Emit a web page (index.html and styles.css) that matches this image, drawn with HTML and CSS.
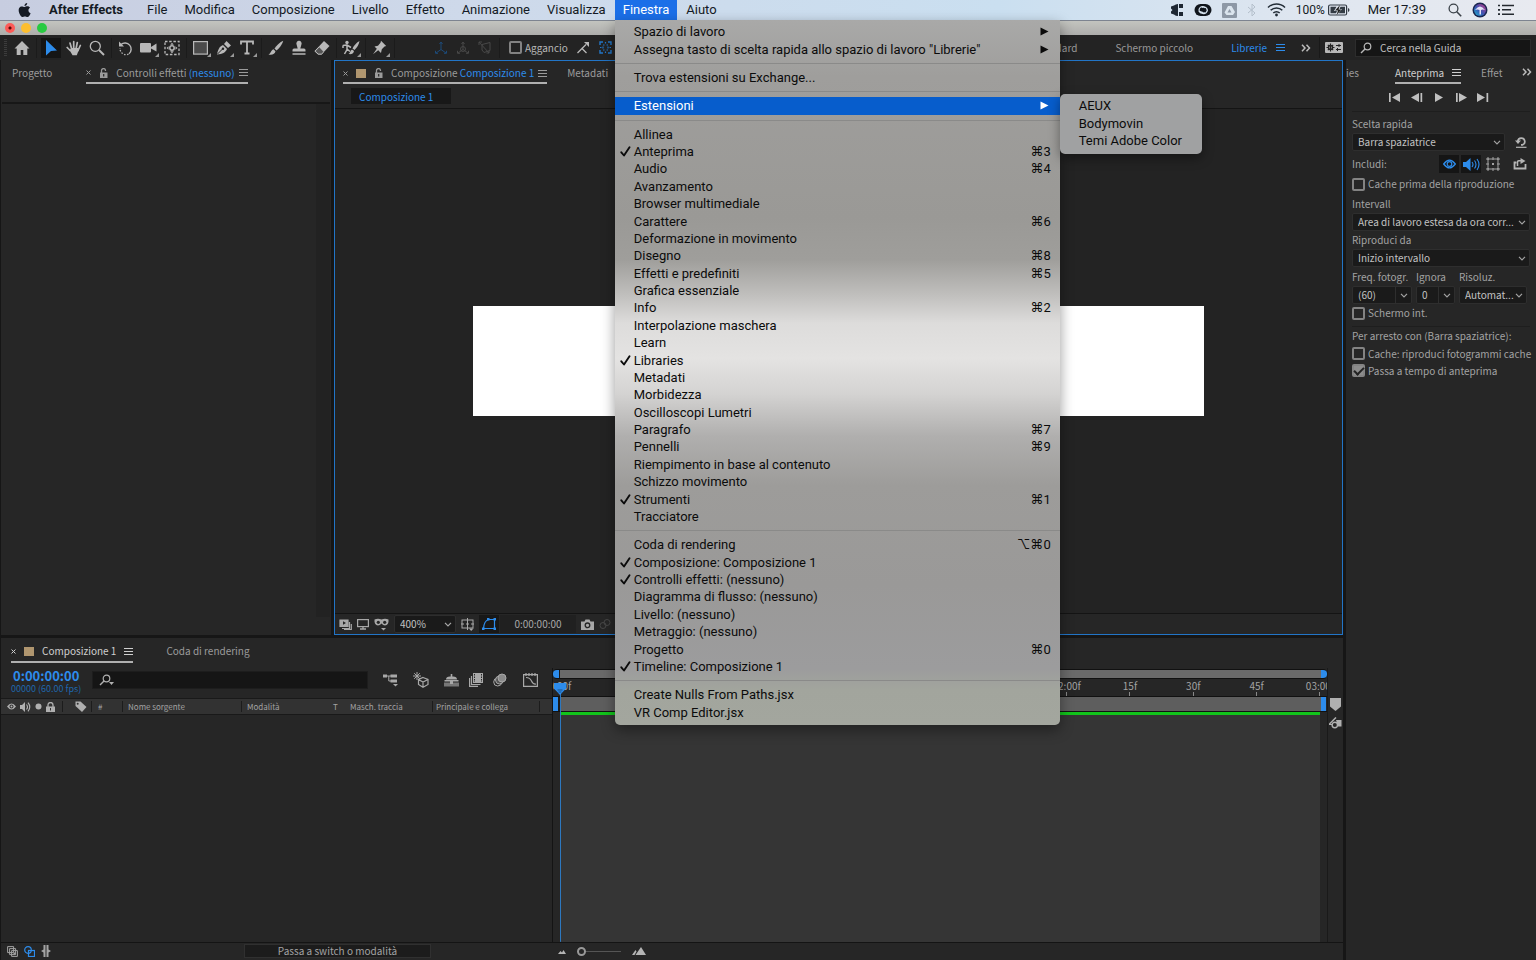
FILE: index.html
```
<!DOCTYPE html>
<html lang="it">
<head>
  <meta charset="UTF-8">
  <title>After Effects</title>
  <link rel="stylesheet" href="styles.css">
</head>
<body>

  <svg class="defs" width="0" height="0">
    <symbol id="i-menu" viewBox="0 0 9 9"><path d="M0 1.500h9M0 4.500h9M0 7.500h9" stroke="currentColor" fill="none"/></symbol>
    <symbol id="i-close" viewBox="0 0 5 5"><path d="M.5.5l4 4M4.500.5l-4 4" stroke="currentColor" fill="none"/></symbol>
    <symbol id="i-lock" viewBox="0 0 9 10"><path d="M1 4.500h7.500V10H1z" fill="currentColor"/><path d="M2.500 5V2.700a2 2 0 0 1 4-.2V3" stroke="currentColor" stroke-width="1.300" fill="none"/><path d="M4.700 6v2.500" stroke="#262626" stroke-width="1.200"/></symbol>
    <symbol id="i-chev" viewBox="0 0 8 5"><path d="M1 .8l3 3 3-3" stroke="currentColor" stroke-width="1.200" fill="none"/></symbol>
    <symbol id="i-more" viewBox="0 0 10 8"><path d="M1 .8l3 3.200-3 3.200M5.500.8l3 3.200-3 3.200" stroke="currentColor" stroke-width="1.500" fill="none"/></symbol>
    <symbol id="i-check" viewBox="0 0 11 11"><path d="M1.300 6.300l2.700 3.200L9.500 1.200" stroke="currentColor" stroke-width="1.900" fill="none" stroke-linecap="round" stroke-linejoin="round"/></symbol>
    <symbol id="i-arrow" viewBox="0 0 9 9"><path d="M.5.5l8 4-8 4z" fill="currentColor"/></symbol>
    <symbol id="i-search" viewBox="0 0 12 12"><circle cx="7.500" cy="4.500" r="3.300" stroke="currentColor" stroke-width="1.200" fill="none"/><path d="M5 7l-4 4" stroke="currentColor" stroke-width="1.500"/></symbol>
    <symbol id="i-axes" viewBox="0 0 14 14"><path d="M7 1.500v7L2 12M7 8.500l5 3.500M5.500 3L7 1l1.500 2M1.500 9.800V12.300h2.500M12.500 9.800v2.500H10" stroke="currentColor" fill="none"/></symbol>
  </svg>

  <header class="menubar">
    <button class="apple" aria-label="Apple">
      <svg width="13" height="15" viewBox="0 0 13 15"><path d="M9.200 0c.1 1.600-1.200 3-2.700 3C6.300 1.500 7.700.1 9.200 0zM6.600 4c.6 0 1.500-.7 2.700-.7 1 0 2 .5 2.700 1.400-2.300 1.300-2 4.600.6 5.500-.5 1.500-1.800 3.800-3.200 3.800-.9 0-1.300-.6-2.500-.6s-1.600.6-2.500.6C2.600 14-1.700 6.500 2.400 3.800c1.800-1 3 .2 4.200.2z" fill="currentColor"/></svg>
    </button>
    <nav class="menus">
      <button class="app-name">After Effects</button>
      <button>File</button>
      <button>Modifica</button>
      <button>Composizione</button>
      <button>Livello</button>
      <button>Effetto</button>
      <button>Animazione</button>
      <button>Visualizza</button>
      <div class="menu-holder">
        <button class="open">Finestra</button>
        <div class="dropdown" role="menu">
          <button class="item" role="menuitem">Spazio di lavoro<svg class="sub" width="9" height="9"><use href="#i-arrow"/></svg></button>
          <button class="item" role="menuitem">Assegna tasto di scelta rapida allo spazio di lavoro "Librerie"<svg class="sub" width="9" height="9"><use href="#i-arrow"/></svg></button>
          <hr>
          <button class="item" role="menuitem">Trova estensioni su Exchange...</button>
          <hr>
          <div class="item-holder">
            <button class="item selected" role="menuitem">Estensioni<svg class="sub" width="9" height="9"><use href="#i-arrow"/></svg></button>
            <div class="submenu" role="menu">
              <button class="item" role="menuitem">AEUX</button>
              <button class="item" role="menuitem">Bodymovin</button>
              <button class="item" role="menuitem">Temi Adobe Color</button>
            </div>
          </div>
          <hr>
          <button class="item" role="menuitem">Allinea</button>
          <button class="item" role="menuitem"><svg class="tick" width="11" height="11"><use href="#i-check"/></svg>Anteprima<kbd>⌘3</kbd></button>
          <button class="item" role="menuitem">Audio<kbd>⌘4</kbd></button>
          <button class="item" role="menuitem">Avanzamento</button>
          <button class="item" role="menuitem">Browser multimediale</button>
          <button class="item" role="menuitem">Carattere<kbd>⌘6</kbd></button>
          <button class="item" role="menuitem">Deformazione in movimento</button>
          <button class="item" role="menuitem">Disegno<kbd>⌘8</kbd></button>
          <button class="item" role="menuitem">Effetti e predefiniti<kbd>⌘5</kbd></button>
          <button class="item" role="menuitem">Grafica essenziale</button>
          <button class="item" role="menuitem">Info<kbd>⌘2</kbd></button>
          <button class="item" role="menuitem">Interpolazione maschera</button>
          <button class="item" role="menuitem">Learn</button>
          <button class="item" role="menuitem"><svg class="tick" width="11" height="11"><use href="#i-check"/></svg>Libraries</button>
          <button class="item" role="menuitem">Metadati</button>
          <button class="item" role="menuitem">Morbidezza</button>
          <button class="item" role="menuitem">Oscilloscopi Lumetri</button>
          <button class="item" role="menuitem">Paragrafo<kbd>⌘7</kbd></button>
          <button class="item" role="menuitem">Pennelli<kbd>⌘9</kbd></button>
          <button class="item" role="menuitem">Riempimento in base al contenuto</button>
          <button class="item" role="menuitem">Schizzo movimento</button>
          <button class="item" role="menuitem"><svg class="tick" width="11" height="11"><use href="#i-check"/></svg>Strumenti<kbd>⌘1</kbd></button>
          <button class="item" role="menuitem">Tracciatore</button>
          <hr>
          <button class="item" role="menuitem">Coda di rendering<kbd>⌥⌘0</kbd></button>
          <button class="item" role="menuitem"><svg class="tick" width="11" height="11"><use href="#i-check"/></svg>Composizione: Composizione 1</button>
          <button class="item" role="menuitem"><svg class="tick" width="11" height="11"><use href="#i-check"/></svg>Controlli effetti: (nessuno)</button>
          <button class="item" role="menuitem">Diagramma di flusso: (nessuno)</button>
          <button class="item" role="menuitem">Livello: (nessuno)</button>
          <button class="item" role="menuitem">Metraggio: (nessuno)</button>
          <button class="item" role="menuitem">Progetto<kbd>⌘0</kbd></button>
          <button class="item" role="menuitem"><svg class="tick" width="11" height="11"><use href="#i-check"/></svg>Timeline: Composizione 1</button>
          <hr>
          <button class="item" role="menuitem">Create Nulls From Paths.jsx</button>
          <button class="item" role="menuitem">VR Comp Editor.jsx</button>
        </div>
      </div>
      <button>Aiuto</button>
    </nav>
    <div class="status">
      <svg width="14" height="14" viewBox="0 0 14 14"><path d="M8 1v12a6 6 0 0 1-4-1.500L1 10.500V8.500L2.500 7 1 5.500v-2l3-1A6 6 0 0 1 8 1z" fill="#1d2733"/><path d="M9 1h4v4H9zM9 9h4v4H9z" fill="#1d2733"/></svg>
      <svg width="18" height="14" viewBox="0 0 18 14"><rect x=".5" y="1" width="17" height="12" rx="6" fill="#10151c"/><path d="M10.500 9.500a3.300 3.300 0 1 1 .5-4.500M4.500 8L9 9.500M8 4.500a3.300 3.300 0 1 1-.5 5" stroke="#d5e2ee" stroke-width="1.200" fill="none"/></svg>
      <svg width="15" height="15" viewBox="0 0 15 15"><rect width="15" height="15" rx="1" fill="#8d98a6"/><path d="M6 3L2.500 9.500 4.500 12h6.500l2-3L9.500 3zM7.500 6l2 3.500h-4z" fill="#dbe5ee" fill-rule="evenodd"/></svg>
      <svg width="10" height="14" viewBox="0 0 10 14"><path d="M1 4l7 6-3 3V1l3 3-7 6" stroke="#b4bfcb" fill="none"/></svg>
      <svg width="19" height="14" viewBox="0 0 19 14"><path d="M1 4.500a12 12 0 0 1 17 0M3.700 7.300a8.200 8.200 0 0 1 11.600 0M6.300 10a4.500 4.500 0 0 1 6.400 0" stroke="#222c36" stroke-width="1.500" fill="none"/><circle cx="9.500" cy="12" r="1.400" fill="#222c36"/></svg>
      <span class="battery">100%
        <svg width="22" height="12" viewBox="0 0 22 12"><rect x=".6" y="1" width="18" height="10" rx="1.500" stroke="#333b44" stroke-width="1.200" fill="none"/><path d="M2.500 2.800h6L6 7h3L8 9.200H2.500zM17 2.800h-4.500L11.500 5H14l-3.500 4.200H17z" fill="#333b44"/><path d="M12 1L7 6.500h3L8.500 11l5-5.500h-3z" fill="#222"/><path d="M20 4v4q1.500-.5 1.500-2T20 4z" fill="#333b44"/></svg>
      </span>
      <span class="clock">Mer 17:39</span>
      <svg width="14" height="14" viewBox="0 0 14 14"><circle cx="5.500" cy="5.500" r="4.400" stroke="#3a4148" stroke-width="1.300" fill="none"/><path d="M8.800 8.800l4.400 4.400" stroke="#3a4148" stroke-width="1.600"/></svg>
      <svg width="16" height="16" viewBox="0 0 16 16"><defs><linearGradient id="siri" x1="0" y1="1" x2="1" y2="0"><stop stop-color="#1fb7cf"/><stop offset=".45" stop-color="#3a56b5"/><stop offset="1" stop-color="#c23a86"/></linearGradient></defs><circle cx="8" cy="8" r="7.500" fill="#1b2650"/><circle cx="8" cy="8" r="6" fill="url(#siri)"/><path d="M3 8q2.500-3.500 5-3.500T13 8q-2.500-.8-4 0v4.500H7.500V8Q5.500 7.200 3 8z" fill="#e6e2f6"/></svg>
      <svg width="17" height="12" viewBox="0 0 17 12"><path d="M4 1.500h12M4 5.800h9M4 10.200h12" stroke="#24292f" stroke-width="1.500"/><path d="M0 1.500h2M0 5.800h2M0 10.200h2" stroke="#24292f" stroke-width="1.700"/></svg>
    </div>
  </header>

  <div class="titlebar">
    <button class="light red" aria-label="Chiudi"></button>
    <button class="light yellow" aria-label="Riduci"></button>
    <button class="light green" aria-label="Zoom"></button>
  </div>

  <div class="toolbar">
    <span class="grip"></span>
    <div class="tools">
      <button aria-label="Home"><svg width="16" height="16" viewBox="0 0 16 16"><path d="M8 1L.5 8.500h2.200V15h4V10h2.600v5h4V8.500h2.200z" fill="currentColor"/></svg></button>
    </div>
    <div class="tools">
      <button class="active" aria-label="Selezione"><svg width="16" height="18" viewBox="0 0 16 18"><path d="M3 1l11 10.500-6 .5-5 4.500z" fill="#2d8ceb"/></svg></button>
      <button aria-label="Mano"><svg width="16" height="16" viewBox="0 0 16 16"><path d="M1.200 7.500l3 3M4 3l1.700 6M7.700 1.500V9M11.300 2.500L10 9M14.300 5.500L12 10.500" stroke="currentColor" stroke-width="1.700" stroke-linecap="round"/><path d="M3.500 10l2-2h6.500l.8 2-2 5.200H6.500z" fill="currentColor"/></svg></button>
      <button aria-label="Zoom"><svg width="16" height="16" viewBox="0 0 16 16"><circle cx="6.300" cy="6.300" r="5" stroke="currentColor" stroke-width="1.300" fill="none"/><path d="M10 10l5 5" stroke="currentColor" stroke-width="2"/></svg></button>
    </div>
    <div class="tools">
      <button aria-label="Rotazione"><svg width="16" height="16" viewBox="0 0 16 16"><path d="M3 4.500a6 6 0 1 1 8 9.300" stroke="currentColor" stroke-width="1.400" fill="none"/><path d="M10.500 14.200A6.200 6.200 0 0 1 2 8" stroke="currentColor" stroke-width="1.300" stroke-dasharray="1.500 1.500" fill="none"/><path d="M1 1.500v5h5z" fill="currentColor"/></svg></button>
      <button class="more" aria-label="Cinepresa"><svg width="17" height="12" viewBox="0 0 17 12"><rect y="1" width="11" height="9.500" rx="1" fill="currentColor"/><path d="M11 5l5.500-3.500v8L11 6.500z" fill="currentColor"/></svg></button>
      <button aria-label="Punto di ancoraggio"><svg width="16" height="16" viewBox="0 0 16 16"><rect x="1" y="1.500" width="14" height="13" stroke="currentColor" stroke-width="1.300" stroke-dasharray="2.500 1.700" fill="none"/><circle cx="8" cy="8" r="2.200" stroke="currentColor" stroke-width="1.500" fill="none"/><path d="M8 2.800l1.800 2H6.200zM8 13.200l1.800-2H6.200zM2.500 8l2-1.800v3.600zM13.500 8l-2-1.800v3.600z" fill="currentColor"/></svg></button>
    </div>
    <div class="tools">
      <button class="more" aria-label="Rettangolo"><svg width="15" height="14" viewBox="0 0 15 14"><rect x=".6" y=".6" width="13.800" height="12.500" fill="#4a4a4a" stroke="currentColor" stroke-width="1.200"/></svg></button>
      <button class="more" aria-label="Penna"><svg width="16" height="16" viewBox="0 0 16 16"><path d="M1 14.500C2 10 3 6.500 7 5l4 4c-1.500 3.500-4.500 5-10 5.500z" fill="currentColor"/><path d="M8 4l2.500-3L15 5.500 12 8z" fill="currentColor"/><path d="M1.500 14L6.500 9" stroke="#232323"/><circle cx="7" cy="8.700" r="1.200" fill="#232323"/></svg></button>
      <button class="more" aria-label="Testo"><svg width="14" height="15" viewBox="0 0 14 15"><path d="M1 4.500V1.500h12v3M7 1.500v12M4.500 13.500h5" stroke="currentColor" stroke-width="1.800" fill="none"/></svg></button>
    </div>
    <div class="tools">
      <button aria-label="Pennello"><svg width="16" height="16" viewBox="0 0 16 16"><path d="M15.300.7C12 2 8.500 5.500 6.500 8.500l2 2C11.500 8 14.500 4 15.300.7z" fill="currentColor"/><path d="M5.500 9.300l2 2c-.5 3-3.500 4-7 3.200 2.500-1 2-4 5-5.200z" fill="currentColor"/></svg></button>
      <button aria-label="Timbro clone"><svg width="16" height="16" viewBox="0 0 16 16"><path d="M8 .8a2.600 2.600 0 0 1 2.500 3.500L9.300 8.500H13a1.500 1.500 0 0 1 1.500 1.500v1.500h-13V10A1.500 1.500 0 0 1 3 8.500h3.700L5.500 4.300A2.600 2.600 0 0 1 8 .8z" fill="currentColor"/><path d="M1.500 14h13" stroke="currentColor" stroke-width="1.500"/></svg></button>
      <button aria-label="Gomma"><svg width="16" height="16" viewBox="0 0 16 16"><path d="M10 1l5.500 5-8 8.500H4L.7 11z" fill="currentColor"/><path d="M5.200 7.300L9.700 12l-2.200 2H4.300L1.500 11z" fill="#555"/><path d="M5 7L.9 11.200l3.300 2.900h3.300L9.700 12" stroke="currentColor" fill="none"/></svg></button>
    </div>
    <div class="tools">
      <button class="more" aria-label="Roto brush"><svg width="18" height="16" viewBox="0 0 18 16"><circle cx="5" cy="2.500" r="1.700" fill="currentColor"/><path d="M.8 5.500L5 5l4 2.500M5 5v4.500L2.500 14M5 9l3 2.500M1 8V5.500" stroke="currentColor" stroke-width="1.500" fill="none"/><path d="M17.500 1C14 3 12 5.500 10.500 8.500l2 1.500c2.500-2.500 4.500-5.500 5-9zM10 9.500l2 1.500c-.5 3-3 3.500-5.500 3 2-1 1.500-3.500 3.500-4.500z" fill="currentColor"/></svg></button>
    </div>
    <div class="tools">
      <button class="more" aria-label="Puntina"><svg width="15" height="15" viewBox="0 0 15 15"><path d="M9 .8l5.200 5.200-1.700.5-2.700 2.800L9 13 2.500 6.500l3.500-.8L8.500 2.800zM5 8.500l1.500 1.500L1 14.300z" fill="currentColor"/></svg></button>
    </div>
    <div class="tools dim">
      <button class="axis" aria-label="Assi locali"><svg width="14" height="14"><use href="#i-axes"/></svg></button>
      <button aria-label="Assi globali"><svg width="14" height="14" viewBox="0 0 14 14"><use href="#i-axes"/><circle cx="7" cy="8" r="2.500" stroke="currentColor" fill="none"/></svg></button>
      <button aria-label="Assi vista"><svg width="14" height="14" viewBox="0 0 14 14"><path d="M4 3.500L12 1.500V9.500L6 11.500 4 9zM1 1l10 11M1 1v3M1 1h3M11 12V9.500M11 12H8.500" stroke="currentColor" fill="none"/></svg></button>
    </div>
    <label class="check snap"><input type="checkbox">Aggancio</label>
    <svg class="snap-icon" width="12" height="13" viewBox="0 0 12 13"><path d="M.5 12L5 7.500l4.500 4.500M5 7.500l4-4" stroke="currentColor" stroke-width="1.300" fill="none"/><path d="M7 1h5v5z" fill="currentColor"/></svg>
    <svg class="snap-blue" width="13" height="13" viewBox="0 0 13 13"><path d="M1 4V1h3M9 1h3v3M12 9v3H9M4 12H1V9" stroke="currentColor" stroke-width="1.400" fill="none"/><path d="M4 4h1.500M7.500 4H9M4 9h1.500M7.500 9H9M6.500 1v1.500M6.500 10.500V12M1 6.500h1.500M10.500 6.500H12M4 5.500v2M9 5.500v2" stroke="currentColor" stroke-width="1.200"/></svg>
    <nav class="workspaces">
      <a href="#">Standard</a>
      <a href="#">Schermo piccolo</a>
      <a href="#" class="current">Librerie<svg width="9" height="9"><use href="#i-menu"/></svg></a>
    </nav>
    <button class="overflow" aria-label="Altre aree"><svg width="10" height="8"><use href="#i-more"/></svg></button>
    <button class="ws-gear" aria-label="Area di lavoro"><svg width="18" height="11" viewBox="0 0 18 11"><rect width="18" height="11" rx="1" fill="currentColor"/><circle cx="5.500" cy="5.500" r="2" stroke="#232323" stroke-width="1.500" fill="none"/><path d="M5.500 1.500v8M1.500 5.500h2M7.500 5.500h2M2.800 2.800l1.400 1.400M8.200 2.800L6.800 4.200M2.800 8.200l1.400-1.400M8.200 8.200L6.800 6.800M11 3.500h5M11 7.500h5" stroke="#232323" stroke-width="1.200"/><path d="M14 2v3M12.500 6v3" stroke="#232323"/></svg></button>
    <label class="help"><svg width="12" height="12"><use href="#i-search"/></svg><input type="text" aria-label="Cerca nella Guida" value="Cerca nella Guida"></label>
  </div>

  <main class="workspace">
    <div class="left-side">
      <div class="upper">
        <section class="panel effects">
          <div class="tabs">
            <button class="tab">Progetto</button>
            <button class="tab on"><svg width="5" height="5"><use href="#i-close"/></svg><svg width="9" height="10"><use href="#i-lock"/></svg><span>Controlli effetti <b>(nessuno)</b></span><svg width="9" height="9"><use href="#i-menu"/></svg></button>
          </div>
          <div class="effects-body"><div class="gutter"></div></div>
        </section>

        <section class="panel comp">
          <div class="tabs">
            <button class="tab on"><svg width="5" height="5"><use href="#i-close"/></svg><em class="swatch"></em><svg width="9" height="10"><use href="#i-lock"/></svg><span>Composizione <b>Composizione 1</b></span><svg width="9" height="9"><use href="#i-menu"/></svg></button>
            <button class="tab">Metadati</button>
          </div>
          <div class="crumbs"><button>Composizione 1</button></div>
          <div class="viewer"><div class="canvas"></div></div>
          <div class="comp-foot">
            <svg width="13" height="11" viewBox="0 0 13 11"><path d="M1 7.500V1h8v6.500zM10.500 3v6.500H3M12.300 5v5.500H5" stroke="currentColor" stroke-width="1.200" fill="none"/><path d="M1 1h8v6H1z" fill="currentColor"/><path d="M4 2.200l3 1.800-3 1.800z" fill="#262626"/></svg>
            <svg width="12" height="11" viewBox="0 0 12 11"><rect x=".6" y=".6" width="10.800" height="7" stroke="currentColor" stroke-width="1.200" fill="none"/><path d="M3 10h6M6 8v2" stroke="currentColor" stroke-width="1.300"/></svg>
            <svg width="15" height="13" viewBox="0 0 15 13"><path d="M.5 1.500q3.500-1.500 7 0 3.500-1.500 7 0 .5 5.500-3.500 6-2 0-3.500-2Q6 7.500 4 7.500 0 7 .5 1.500z" fill="currentColor"/><circle cx="4.300" cy="4.300" r="1.600" fill="#262626"/><circle cx="10.700" cy="4.300" r="1.600" fill="#262626"/><path d="M7 10h5l-2.500 2.500z" fill="currentColor"/></svg>
            <label class="select zoom"><select aria-label="Ingrandimento"><option>400%</option></select><svg width="8" height="5"><use href="#i-chev"/></svg></label>
            <svg width="13" height="13" viewBox="0 0 13 13"><rect x="1" y="2" width="11" height="8" stroke="currentColor" fill="none"/><path d="M6.500 0v12M0 6h3M10 6h3M5 6h3" stroke="currentColor"/><path d="M8 10.500h4.500L10.200 13z" fill="currentColor"/></svg>
            <button class="mask" aria-label="Tracciato maschera"><svg width="14" height="12" viewBox="0 0 14 12"><path d="M1.500 10.500Q2 3 6.500 1.500h6v9z" stroke="currentColor" stroke-width="1.200" fill="none"/><path d="M0 9.500h2.500V12H0zM11.500 9.500H14V12h-2.500zM11.500 0H14v2.500h-2.500zM5 0h2.500v2.500H5z" fill="currentColor"/></svg></button>
            <button class="time">0:00:00:00</button>
            <svg width="13" height="11" viewBox="0 0 13 11"><path d="M0 2.500h3.500L4.500.5h4l1 2H13V11H0z" fill="currentColor"/><circle cx="6.500" cy="6.300" r="2.300" stroke="#262626" stroke-width="1.300" fill="none"/></svg>
            <svg class="faint" width="13" height="12" viewBox="0 0 13 12"><circle cx="4" cy="7.500" r="3" stroke="currentColor" fill="none"/><circle cx="8" cy="4.500" r="3" stroke="currentColor" fill="none"/></svg>
          </div>
        </section>
      </div>

      <section class="panel timeline">
        <div class="tabs">
          <button class="tab on"><svg width="5" height="5"><use href="#i-close"/></svg><em class="swatch"></em><span>Composizione 1</span><svg width="9" height="9"><use href="#i-menu"/></svg></button>
          <button class="tab">Coda di rendering</button>
        </div>
        <div class="tl-main">
          <div class="layers">
            <div class="tl-tools">
              <div class="timecode"><strong>0:00:00:00</strong><small>00000 (60.00 fps)</small></div>
              <label class="tl-search"><svg width="16" height="12" viewBox="0 0 16 12"><use href="#i-search" width="12" height="12"/><path d="M10 8h5l-2.500 3z" fill="currentColor"/></svg><input type="text" aria-label="Cerca"></label>
              <div class="tl-icons">
                <svg width="15" height="14" viewBox="0 0 15 14"><path d="M0 1.500h4v3H0zM7.500 1.500H14v3H7.500zM7.500 6.500H14v3H7.500z" fill="currentColor"/><path d="M4 3h4M5.800 3v5H8" stroke="currentColor" fill="none"/><path d="M10 11h5l-2.500 2.500z" fill="currentColor"/></svg>
                <svg width="16" height="16" viewBox="0 0 16 16"><path d="M4 0v8M0 4h8M1.200 1.200l5.600 5.600M6.800 1.200L1.200 6.800" stroke="currentColor"/><path d="M10 5.500l5 2v5l-5 2.700-4.500-2.700v-5zM5.500 7.500L10 10l5-2.500M10 10v5" stroke="currentColor" stroke-width="1.200" fill="none"/></svg>
                <svg width="15" height="13" viewBox="0 0 15 13"><path d="M0 8.500h15v4H0z" fill="#777"/><path d="M2 5.500q0-3 4-3h3q4 0 4 3zM6.700 0h1.600v3H6.700zM.5 6h14v1.500H.5zM6 7h3v3H6z" fill="currentColor"/></svg>
                <svg width="14" height="14" viewBox="0 0 14 14"><path d="M4 0h10v10H4z" fill="currentColor"/><path d="M5.500 1v8M12.500 1v8" stroke="#262626" stroke-dasharray="1.500 1"/><path d="M2.500 3v8.500h9M.6 5v8.400H9" stroke="currentColor" stroke-width="1.200" fill="none"/></svg>
                <svg width="14" height="14" viewBox="0 0 14 14"><circle cx="4.700" cy="9" r="4" stroke="currentColor" fill="none"/><circle cx="6.500" cy="7" r="4" stroke="currentColor" fill="#555"/><circle cx="9" cy="5" r="4" stroke="currentColor" fill="#8a8a8a"/></svg>
                <svg width="15" height="14" viewBox="0 0 15 14"><path d="M.6 1.600h13.800v11.800H.6zM3 4.500q4 0 5.500 3.500T13 11M3 0v3M6 0v3M9 0v3M12 0v3" stroke="currentColor" stroke-width="1.200" fill="none"/></svg>
              </div>
            </div>
            <div class="columns">
              <div class="av">
                <svg width="9" height="7" viewBox="0 0 9 7"><path d="M0 3.500Q4.500-2.500 9 3.500 4.500 9.500 0 3.500z" fill="currentColor"/><circle cx="4.500" cy="3.500" r="2" fill="#323232"/><circle cx="4.500" cy="3.500" r="1" fill="currentColor"/></svg>
                <svg width="11" height="10" viewBox="0 0 11 10"><path d="M0 3h2l3-3v10L2 7H0z" fill="currentColor"/><path d="M6.500 2.500q2 2.500 0 5M8 .7q3.500 4.300 0 8.600" stroke="currentColor" stroke-width="1.200" fill="none"/></svg>
                <svg width="7" height="7" viewBox="0 0 7 7"><circle cx="3.500" cy="3.500" r="3" fill="currentColor"/></svg>
                <svg width="9" height="10" viewBox="0 0 9 10"><path d="M0 4.500h9V10H0z" fill="currentColor"/><path d="M2 5V3a2.500 2.500 0 0 1 5 0v2" stroke="currentColor" stroke-width="1.300" fill="none"/><path d="M4.500 6v2.500" stroke="#323232"/></svg>
              </div>
              <div class="tag"><svg width="12" height="11" viewBox="0 0 12 11"><path d="M.5.500H5.500l6 5.500-4.500 5L.5 5z" fill="currentColor"/><circle cx="2.700" cy="2.700" r="1" fill="#323232"/></svg></div>
              <div class="num">#</div>
              <div class="source">Nome sorgente</div>
              <div class="mode">Modalità</div>
              <div class="matte-t">T</div>
              <div class="matte">Masch. traccia</div>
              <div class="parent">Principale e collega</div>
              <div class="rest"></div>
            </div>
            <div class="layer-list"></div>
          </div>

          <div class="track">
            <div class="navigator"></div>
            <div class="ruler">
              <span>0:00f</span><span>15f</span><span>30f</span><span>45f</span><span>01:00f</span><span>15f</span><span>30f</span><span>45f</span><span>02:00f</span><span>15f</span><span>30f</span><span>45f</span><span>03:00f</span>
            </div>
            <div class="work-area"></div>
            <div class="cache"></div>
            <div class="track-body"></div>
            <div class="playhead"><svg width="12" height="12" viewBox="0 0 12 12"><path d="M0 0h12v5.500L6 12 0 5.500z" fill="#2d8ceb"/><path d="M3.500 7h5M4.500 9h3" stroke="#1a4f86"/></svg></div>
          </div>

          <div class="markers">
            <svg width="11" height="13" viewBox="0 0 11 13"><path d="M0 0h11v8.500L5.500 13 0 8.500z" fill="currentColor"/></svg>
            <svg width="13" height="12" viewBox="0 0 13 12"><path d="M0 7.500L7 .5" stroke="currentColor" stroke-width="1.500" fill="none"/><path d="M7 3h5.500v6.500H9z" fill="currentColor"/><circle cx="5.800" cy="8" r="2.700" stroke="currentColor" stroke-width="1.400" fill="none"/><path d="M0 7.500h3" stroke="currentColor"/></svg>
          </div>
        </div>
        <div class="tl-foot">
          <div class="foot-left">
            <svg width="11" height="11" viewBox="0 0 11 11"><path d="M.6.6h6v6h-6zM2.600 2.600h6v6h-6zM4.600 4.600h5.800v5.800H4.600z" stroke="currentColor" fill="#262626"/><path d="M6.500 6.500h2v2h-2z" fill="currentColor"/></svg>
            <svg class="blue" width="11" height="11" viewBox="0 0 11 11"><circle cx="4" cy="4" r="3.300" stroke="currentColor" stroke-width="1.200" fill="none"/><rect x="4.500" y="4.500" width="6" height="6" stroke="currentColor" stroke-width="1.200" fill="none"/></svg>
            <svg width="10" height="12" viewBox="0 0 10 12"><path d="M4 0H2.500v4.500L0 6l2.500 1.500V12H4zM6 0h1.500v4.500L10 6 7.500 7.500V12H6z" fill="currentColor"/><path d="M5 0v12" stroke="currentColor"/></svg>
          </div>
          <button class="switch">Passa a switch o modalità</button>
          <div class="tl-zoom">
            <svg width="8" height="5" viewBox="0 0 8 5"><path d="M0 5l2.500-3L4 3.500 5.500 1 8 5z" fill="currentColor"/></svg>
            <input type="range" min="0" max="100" value="0" aria-label="Zoom timeline">
            <svg width="14" height="8" viewBox="0 0 14 8"><path d="M0 8l3.500-5 1 1.500L2.500 8zM3.500 8L9 0l5 8z" fill="currentColor"/></svg>
          </div>
        </div>
      </section>
    </div>

    <aside class="panel preview">
      <div class="tabs">
        <button class="tab">ies</button>
        <button class="tab on"><span>Anteprima</span><svg width="9" height="9"><use href="#i-menu"/></svg></button>
        <button class="tab">Effet</button>
        <button class="overflow" aria-label="Altri pannelli"><svg width="10" height="8"><use href="#i-more"/></svg></button>
      </div>
      <div class="transport">
        <button aria-label="Primo fotogramma"><svg width="12" height="9" viewBox="0 0 12 9"><path d="M0 0h1.700v9H0zM11 0v9L3 4.500z" fill="currentColor"/></svg></button>
        <button aria-label="Precedente"><svg width="12" height="9" viewBox="0 0 12 9"><path d="M8 0v9L0 4.500zM9.500 0h1.700v9H9.500z" fill="currentColor"/></svg></button>
        <button aria-label="Riproduci"><svg width="12" height="9" viewBox="0 0 12 9"><path d="M2 0l8 4.500L2 9z" fill="currentColor"/></svg></button>
        <button aria-label="Successivo"><svg width="12" height="9" viewBox="0 0 12 9"><path d="M1 0h1.700v9H1zM4 0l8 4.500L4 9z" fill="currentColor"/></svg></button>
        <button aria-label="Ultimo fotogramma"><svg width="12" height="9" viewBox="0 0 12 9"><path d="M0 0l8 4.500L0 9zM9.500 0h1.700v9H9.500z" fill="currentColor"/></svg></button>
      </div>
      <div class="form">
        <label class="caption" for="shortcut">Scelta rapida</label>
        <div class="line">
          <div class="select grow"><select id="shortcut"><option>Barra spaziatrice</option></select><svg width="8" height="5"><use href="#i-chev"/></svg></div>
          <button class="side" aria-label="Ripristina"><svg width="12" height="12" viewBox="0 0 12 12"><path d="M2.800 5.200a3.500 3.500 0 1 1 4.700 3.700H6" stroke="currentColor" stroke-width="1.700" fill="none"/><path d="M0 4.500h6L3 8z" fill="currentColor"/><path d="M1 11.300h10.500" stroke="currentColor" stroke-width="1.200"/></svg></button>
        </div>
        <div class="line include">
          <span>Includi:</span>
          <button class="pressed" aria-label="Video"><svg width="13" height="10" viewBox="0 0 13 10"><path d="M.7 5Q6.500-2.800 12.300 5 6.500 12.800.7 5z" stroke="currentColor" stroke-width="1.300" fill="none"/><circle cx="6.500" cy="5" r="2.300" stroke="currentColor" stroke-width="1.200" fill="none"/></svg></button>
          <button class="pressed" aria-label="Audio"><svg width="17" height="13" viewBox="0 0 17 13"><path d="M0 4h3l4.500-4v13L3 9H0z" fill="currentColor"/><path d="M9 4q2 2.500 0 5M11.500 2.500q3 4 0 8M14 1q4 5.500 0 11" stroke="currentColor" stroke-width="1.100" fill="none"/></svg></button>
          <button class="plain" aria-label="Sovrapposizioni"><svg width="14" height="14" viewBox="0 0 14 14"><rect x="2" y="2" width="10" height="10" stroke="currentColor" fill="none"/><path d="M2 0v3M7 0v3M12 0v3M2 11v3M7 11v3M12 11v3M0 2h3M11 2h3M0 12h3M11 12h3M0 7h3M11 7h3" stroke="currentColor"/><rect x="6" y="6" width="2" height="2" fill="currentColor"/></svg></button>
          <button class="side" aria-label="Ciclo"><svg width="14" height="12" viewBox="0 0 14 12"><path d="M3.500 4.500h-2v6h11V6" stroke="currentColor" stroke-width="1.800" fill="none"/><path d="M4.500 8V4q0-1.200 1.200-1.200H8" stroke="currentColor" stroke-width="1.500" fill="none"/><path d="M7.500 0l5 2.900-5 3z" fill="currentColor"/></svg></button>
        </div>
        <label class="check"><input type="checkbox">Cache prima della riproduzione</label>
        <label class="caption" for="range">Intervall</label>
        <div class="select"><select id="range"><option>Area di lavoro estesa da ora corr...</option></select><svg width="8" height="5"><use href="#i-chev"/></svg></div>
        <label class="caption" for="from">Riproduci da</label>
        <div class="select"><select id="from"><option>Inizio intervallo</option></select><svg width="8" height="5"><use href="#i-chev"/></svg></div>
        <div class="trio">
          <label class="caption" for="fps">Freq. fotogr.</label>
          <label class="caption" for="skip">Ignora</label>
          <label class="caption" for="res">Risoluz.</label>
          <div class="select split"><select id="fps"><option>(60)</option></select><svg width="8" height="5"><use href="#i-chev"/></svg></div>
          <div class="select split"><select id="skip"><option>0</option></select><svg width="8" height="5"><use href="#i-chev"/></svg></div>
          <div class="select"><select id="res"><option>Automat...</option></select><svg width="8" height="5"><use href="#i-chev"/></svg></div>
        </div>
        <label class="check"><input type="checkbox">Schermo int.</label>
        <div class="stop">
          <p class="caption">Per arresto con (Barra spaziatrice):</p>
          <label class="check"><input type="checkbox">Cache: riproduci fotogrammi cache</label>
          <label class="check"><input type="checkbox" checked>Passa a tempo di anteprima</label>
        </div>
      </div>
    </aside>
  </main>

</body>
</html>
```
FILE: styles.css
```
* {
  box-sizing: border-box;
}
body {
  margin: 0;
  height: 100vh;
  display: flex;
  flex-direction: column;
  overflow: hidden;
  background: #161616;
  color: #a3a3a3;
  font-family: "Noto Sans CJK JP", "Noto Sans", sans-serif;
  font-size: 10px;
  line-height: 16px;
}
button, input, select {
  font: inherit;
  color: inherit;
  background: none;
  border: 0;
  padding: 0;
  margin: 0;
}
a {
  color: inherit;
  text-decoration: none;
}
svg {
  flex: none;
  display: block;
}
.defs {
  position: absolute;
}

/* macOS menu bar */
.menubar {
  flex: none;
  display: flex;
  height: 20px;
  background: linear-gradient(90deg, #c7cde0, #ced9ea 30%, #cadff0 65%, #dfe6f0 85%, #e8eaf0);
  color: #141a24;
  font-family: Roboto, Inter, "DejaVu Sans", sans-serif;
  font-size: 13px;
  line-height: 20px;
}
.apple {
  width: 41px;
  padding-left: 18px;
}
.menus {
  display: flex;
  gap: 1px;
}
.menus > button, .menu-holder > button {
  padding: 0 8px;
  height: 20px;
}
.menus .app-name {
  margin-right: 7px;
  font-weight: 700;
}
.menu-holder {
  position: relative;
}
.menu-holder > .open {
  background: #1b6fe8;
  color: #fff;
}
.dropdown {
  position: absolute;
  z-index: 10;
  top: 20px;
  left: 0;
  width: 445px;
  height: 705px;
  padding: 3px 0 4px;
  display: flex;
  flex-direction: column;
  border-radius: 0 0 5px 5px;
  background: linear-gradient(#a9a9a8, #9f9e9c 8%, #9a9996 28%, #9f9e9b 34%, #c0bfbd 39%, #dddcdb 43%, #e4e3e2 48%, #d4d3d2 53%, #b0afae 59%, #9d9c9a 66%, #9a9998 80%, #9c9c9d 92%, #a2a59d 95%, #a3a69e);
  box-shadow: 0 5px 14px rgba(0, 0, 0, .4);
  color: #0b0b0b;
}
.item-holder {
  flex: 1;
  display: flex;
  position: relative;
}
.item {
  flex: 1;
  min-height: 0;
  display: flex;
  align-items: center;
  position: relative;
  padding: 0 9px 0 19px;
  line-height: 17px;
  text-align: left;
  white-space: nowrap;
}
.item.selected {
  background: #075dcc;
  color: #fff;
}
.item kbd {
  margin-left: auto;
  font: inherit;
}
.item .sub {
  margin-left: auto;
  margin-right: 2px;
}
.item .tick {
  position: absolute;
  left: 5px;
}
.dropdown hr {
  width: 100%;
  height: 11px;
  margin: 0;
  border: 0;
  background: linear-gradient(#8a8a89, #8a8a89) center / 100% 1px no-repeat;
}
.submenu {
  position: absolute;
  top: -3px;
  left: 100%;
  width: 142px;
  height: 60px;
  padding: 3px 0 5px;
  display: flex;
  flex-direction: column;
  border-radius: 5px;
  background: #a0a1a2;
  box-shadow: 0 4px 12px rgba(0, 0, 0, .4);
  color: #0b0b0b;
}
.status {
  margin-left: auto;
  margin-right: 21px;
  display: flex;
  align-items: center;
  gap: 10px;
}
.battery {
  display: flex;
  align-items: center;
  gap: 3px;
  font-size: 12px;
}
.clock {
  margin: 0 12px 0 8px;
}

.titlebar {
  flex: none;
  display: flex;
  align-items: center;
  gap: 6px;
  height: 15px;
  padding-left: 5px;
  background: linear-gradient(#c3c4bf, #adadab);
  border-top: 1px solid #7d8490;
}
.light {
  width: 10px;
  height: 10px;
  border-radius: 50%;
}
.red {
  background: radial-gradient(circle, #5c0b08 1px, #fc5b57 2px);
}
.yellow {
  background: #fdbe2e;
}
.green {
  background: #28ca41;
}

/* tools row */
.toolbar {
  flex: none;
  display: flex;
  align-items: center;
  height: 25px;
  background: #232323;
  color: #b8b8b8;
}
.grip {
  width: 3px;
  height: 18px;
  margin: 0 3px 0 4px;
  background: repeating-linear-gradient(#3c3c3c 0 1px, #232323 1px 2px);
}
.tools {
  display: flex;
  padding-right: 3px;
  margin-right: 2px;
  border-right: 1px solid #1b1b1b;
}
.tools button {
  position: relative;
  width: 23px;
  height: 20px;
  display: grid;
  place-items: center;
}
.tools .active {
  background: linear-gradient(#151515, #151515) center / 20px 20px no-repeat;
}
.tools .more::after {
  content: "";
  position: absolute;
  right: 1px;
  bottom: 1px;
  border: 2px solid #999;
  border-top-color: transparent;
  border-left-color: transparent;
}
.tools.dim {
  margin-left: 33px;
  color: #484848;
}
.tools.dim button {
  width: 22px;
}
.tools .axis {
  color: #1d4a78;
}
.check {
  display: flex;
  align-items: center;
  gap: 3px;
  height: 18px;
  white-space: nowrap;
}
.check input {
  appearance: none;
  flex: none;
  display: grid;
  place-items: center;
  width: 13px;
  height: 13px;
  border: 2px solid #838383;
  border-radius: 2px;
}
.check input:checked {
  background: #8d8d8d;
}
.check input:checked::before {
  content: "";
  width: 4px;
  height: 8px;
  margin-top: -2px;
  border: solid #222;
  border-width: 0 2px 2px 0;
  transform: rotate(45deg);
}
.snap {
  margin-left: 7px;
}
.snap-icon {
  margin-left: 9px;
}
.snap-blue {
  margin-left: 10px;
  color: #2377c9;
}
.workspaces {
  margin-left: auto;
  display: flex;
  gap: 38px;
  color: #999;
}
.current {
  display: flex;
  align-items: center;
  gap: 9px;
  color: #2d8ceb;
}
.overflow {
  color: #bbb;
}
.toolbar .overflow {
  padding: 0 8px 0 16px;
}
.ws-gear {
  padding: 5px 12px 5px 5px;
  border-left: 1px solid #191919;
}
.help {
  display: flex;
  align-items: center;
  gap: 8px;
  width: 176px;
  height: 18px;
  margin-right: 5px;
  padding: 0 4px;
  background: #151515;
  border: 1px solid #2c2c2c;
}
.help input {
  width: 100%;
  min-width: 0;
  color: #c0c0c0;
}

/* panels */
.workspace {
  flex: 1;
  min-height: 0;
  display: flex;
  gap: 3px;
  padding: 0 0 0 1px;
}
.left-side {
  flex: 1;
  min-width: 0;
  display: flex;
  flex-direction: column;
  gap: 3px;
}
.upper {
  flex: 576;
  min-height: 0;
  display: flex;
  gap: 3px;
}
.panel {
  display: flex;
  flex-direction: column;
  background: #262626;
}
.tabs {
  flex: none;
  display: flex;
  height: 24px;
}
.tab {
  display: flex;
  align-items: center;
  gap: 8px;
  white-space: nowrap;
  padding: 3px 0 0;
  border-bottom: 2px solid transparent;
  color: #9b9b9b;
}
.tab.on {
  border-color: #b0b0b0;
}
.tab b {
  font-weight: 400;
  color: #2d8ceb;
}
.upper .tab > svg:last-child {
  margin-left: -4px;
}
.swatch {
  width: 10px;
  height: 9px;
  background: #b0966f;
}
.effects {
  width: 330px;
}
.effects .tabs {
  gap: 34px;
  padding-left: 11px;
}
.effects-body {
  flex: 1;
  display: flex;
  justify-content: flex-end;
  margin: 18px 1px 0;
  border-top: 2px solid #171717;
}
.gutter {
  width: 14px;
  margin-bottom: 18px;
  background: #222;
}
.comp {
  flex: 1;
  min-width: 0;
  border: 1px solid #2275c7;
}
.comp .tabs {
  gap: 20px;
  padding-left: 8px;
  height: 23px;
}
.crumbs {
  height: 25px;
  padding: 4px 16px;
  border-bottom: 1px solid #141414;
}
.crumbs button {
  display: block;
  width: 100px;
  height: 16px;
  padding-left: 8px;
  line-height: 15px;
  text-align: left;
  background: #181818;
  color: #2d8ceb;
}
.viewer {
  flex: 1;
  display: grid;
  place-items: center;
  background: #232323;
}
.canvas {
  width: 731px;
  height: 110px;
  background: #fff;
}
.comp-foot {
  flex: none;
  display: flex;
  align-items: center;
  gap: 5px;
  height: 21px;
  padding-left: 4px;
  border-top: 1px solid #141414;
  color: #a8a8a8;
}
.mask {
  width: 20px;
  height: 18px;
  display: grid;
  place-items: center;
  background: #181818;
  color: #2d8ceb;
}
.time {
  width: 76px;
  height: 18px;
  margin-left: -4px;
  background: #202020;
}
.faint {
  color: #484848;
}
.select {
  position: relative;
  height: 18px;
}
.select select {
  appearance: none;
  display: block;
  width: 100%;
  height: 100%;
  padding: 0 5px;
  line-height: 16px;
  background: #1a1a1a;
  border: 1px solid #2e2e2e;
  border-radius: 2px;
  color: #c2c2c2;
}
.select svg {
  position: absolute;
  right: 4px;
  top: 7px;
}
.zoom {
  width: 62px;
}

/* timeline */
.timeline {
  flex: 322;
  min-height: 0;
}
.timeline .tabs {
  gap: 33px;
  padding-left: 10px;
  height: 25px;
}
.timeline .tab.on {
  color: #cfcfcf;
}
.tl-main {
  flex: 1;
  min-height: 0;
  display: flex;
  padding-top: 5px;
}
.layers {
  width: 552px;
  display: flex;
  flex-direction: column;
  border-right: 1px solid #141414;
}
.tl-tools {
  display: flex;
  height: 30px;
}
.timecode {
  width: 81px;
  display: flex;
  flex-direction: column;
  margin-left: 10px;
  color: #2d8ceb;
}
.timecode strong {
  font-size: 13px;
  font-weight: 700;
  line-height: 15px;
  padding-left: 2px;
}
.timecode small {
  font-size: 9px;
  line-height: 11px;
  color: #1f66ad;
}
.tl-search {
  width: 276px;
  height: 18px;
  margin-top: 3px;
  padding: 2px 6px;
  display: flex;
  background: #151515;
  border: 1px solid #1d1d1d;
  color: #b0b0b0;
}
.tl-search input {
  width: 100%;
  min-width: 0;
}
.tl-icons {
  flex: 1;
  display: flex;
  align-items: center;
  gap: 10px;
  height: 24px;
  padding-left: 15px;
  color: #a8a8a8;
}
.tl-icons svg:nth-child(1), .tl-icons svg:nth-child(2) {
  margin-right: 5px;
}
.tl-icons svg:last-child {
  margin-left: 6px;
}
.columns {
  display: flex;
  align-items: center;
  height: 17px;
  background: #323232;
  border-top: 1px solid #191919;
  border-bottom: 1px solid #191919;
  font-size: 8px;
  line-height: 15px;
}
.columns > div {
  flex: none;
  height: 11px;
  line-height: 11px;
  border-right: 1px solid #1c1c1c;
}
.av {
  width: 62px;
  display: flex;
  align-items: center;
  gap: 4px;
  padding-left: 6px;
  color: #b0b0b0;
}
.tag {
  width: 29px;
  padding-left: 12px;
  color: #b0b0b0;
}
.num {
  width: 31px;
  padding-left: 6px;
}
.source {
  width: 119px;
  padding-left: 5px;
}
.columns .mode {
  width: 91px;
  padding-left: 5px;
  border: 0;
}
.columns .matte-t {
  width: 12px;
  border: 0;
}
.matte {
  width: 88px;
  padding-left: 5px;
}
.parent {
  width: 107px;
  padding-left: 3px;
}
.columns .rest {
  border: 0;
}
.track {
  position: relative;
  flex: 1;
  min-width: 0;
  display: flex;
  flex-direction: column;
}
.navigator {
  height: 10px;
  margin-top: 1px;
  border: 1px solid #111;
  border-width: 1px 0;
  border-radius: 4px;
  background: linear-gradient(90deg, #2d8ceb 6px, #1a1a1a 6px 7px, #6a6a6a 7px calc(100% - 6px), #2d8ceb calc(100% - 6px));
}
.ruler {
  display: flex;
  justify-content: space-between;
  height: 17px;
  padding: 0 7px;
  overflow: hidden;
  font-size: 10px;
  line-height: 13px;
}
.ruler span {
  position: relative;
  width: 0;
  display: flex;
  justify-content: center;
}
.ruler span::after {
  content: "";
  position: absolute;
  bottom: 0;
  width: 1px;
  height: 4px;
  background: #888;
}
.work-area {
  height: 16px;
  border: 1px solid #111;
  border-width: 1px 0;
  background: linear-gradient(90deg, #2d8ceb 5px, #1a1a1a 5px 7px, #5e5e5e 7px calc(100% - 6px), #2d8ceb calc(100% - 6px) calc(100% - 1px), #262626 calc(100% - 1px));
}
.cache {
  height: 3px;
  margin: 0 7px;
  background: #12c41b;
}
.track-body {
  flex: 1;
  border: solid #262626;
  border-width: 0 7px;
  background: #353535;
}
.playhead {
  position: absolute;
  top: 15px;
  bottom: 0;
  left: 1px;
  width: 12px;
  background: linear-gradient(#2d78bf, #2d78bf) center / 1px 100% no-repeat;
}
.markers {
  width: 16px;
  display: flex;
  flex-direction: column;
  align-items: center;
  gap: 6px;
  padding-top: 30px;
  border-left: 1px solid #1a1a1a;
  color: #b0b0b0;
}
.tl-foot {
  flex: none;
  display: flex;
  align-items: center;
  height: 18px;
  padding-bottom: 1px;
  border-top: 1px solid #141414;
}
.foot-left {
  display: flex;
  align-items: center;
  gap: 6px;
  width: 243px;
  padding-left: 6px;
}
.blue {
  color: #2d8ceb;
}
.switch {
  width: 187px;
  height: 14px;
  line-height: 12px;
  background: #1c1c1c;
  border: 1px solid #303030;
}
.tl-zoom {
  display: flex;
  align-items: center;
  gap: 11px;
  margin-left: 127px;
  color: #b5b5b5;
}
.tl-zoom input {
  appearance: none;
  width: 44px;
  height: 10px;
  background: linear-gradient(#555, #555) center / 100% 1px no-repeat;
}
.tl-zoom input::-webkit-slider-thumb {
  appearance: none;
  width: 9px;
  height: 9px;
  border: 2px solid #999;
  border-radius: 50%;
  background: #262626;
}

/* preview panel */
.preview {
  width: 190px;
  padding: 0 6px;
}
.preview .tabs {
  margin-left: -6px;
}
.preview .tab.on {
  margin: 0 20px 0 36px;
  color: #cfcfcf;
}
.preview .overflow {
  margin-left: auto;
  margin-right: -2px;
}
.transport {
  display: flex;
  justify-content: center;
  gap: 10px;
  height: 28px;
  padding-right: 4px;
  border-bottom: 1px solid #1e1e1e;
  color: #c0c0c0;
}
.form {
  display: flex;
  flex-direction: column;
  padding-top: 3px;
}
.caption {
  height: 18px;
  margin: 0;
  line-height: 17px;
  white-space: nowrap;
}
.line {
  display: flex;
  align-items: center;
  height: 18px;
}
.grow {
  flex: 1;
}
.side {
  width: 25px;
  display: flex;
  justify-content: flex-end;
  padding-right: 3px;
  color: #b5b5b5;
}
.include {
  height: 20px;
  margin: 3px 0 1px;
}
.include > span {
  margin-right: auto;
}
.include .pressed, .include .plain {
  width: 20px;
  height: 18px;
  margin-left: 2px;
  display: grid;
  place-items: center;
}
.include .pressed {
  background: #151515;
  color: #2d8ceb;
}
.include .side {
  width: 27px;
}
.include + .check {
  margin-bottom: 2px;
}
.trio {
  display: grid;
  grid-template-columns: 60px 39px 68px;
  column-gap: 4px;
  margin-top: 1px;
}
.split::after {
  content: "";
  position: absolute;
  top: 1px;
  bottom: 1px;
  right: 16px;
  width: 1px;
  background: #2e2e2e;
}
.stop {
  margin-top: 4px;
  border-top: 1px solid #1e1e1e;
}
.stop .check {
  height: 17px;
}
```
